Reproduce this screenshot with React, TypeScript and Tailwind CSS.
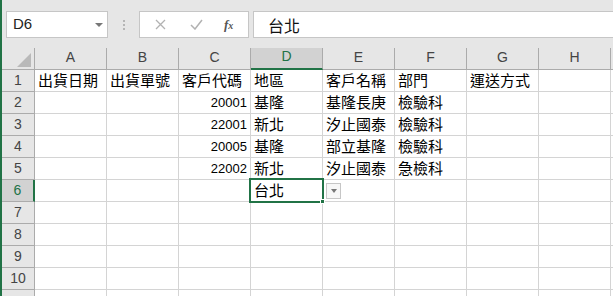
const COLS = ["A", "B", "C", "D", "E", "F", "G", "H"];

type Cell = { text: string; num?: boolean };

const DATA: Record<number, Record<string, Cell>> = {
  1: {
    A: { text: "出貨日期" },
    B: { text: "出貨單號" },
    C: { text: "客戶代碼" },
    D: { text: "地區" },
    E: { text: "客戶名稱" },
    F: { text: "部門" },
    G: { text: "運送方式" },
  },
  2: { C: { text: "20001", num: true }, D: { text: "基隆" }, E: { text: "基隆長庚" }, F: { text: "檢驗科" } },
  3: { C: { text: "22001", num: true }, D: { text: "新北" }, E: { text: "汐止國泰" }, F: { text: "檢驗科" } },
  4: { C: { text: "20005", num: true }, D: { text: "基隆" }, E: { text: "部立基隆" }, F: { text: "檢驗科" } },
  5: { C: { text: "22002", num: true }, D: { text: "新北" }, E: { text: "汐止國泰" }, F: { text: "急檢科" } },
};

const cjk = "font-['Noto_Sans_CJK_TC','Noto_Sans_CJK_SC',sans-serif]";
const ui = "font-['Liberation_Sans','Noto_Sans_CJK_TC',sans-serif]";

function FormulaBar() {
  return (
    <div className="h-[37px] bg-[#e6e6e6] pt-[11px]">
      <div className="flex h-[27px] items-stretch">
        <div className="ml-[4px] flex w-[102px] items-center justify-between border border-[#c6c6c6] bg-white pl-[6px] pr-[4px]">
          <span className={`${ui} text-[15px] text-[#222]`}>D6</span>
          <span className="h-0 w-0 border-x-[4px] border-t-[4px] border-x-transparent border-t-[#777]" />
        </div>
        <div className="flex w-[31px] flex-col items-center justify-center gap-[2px]">
          <span className="h-[2px] w-[2px] bg-[#b5b5b5]" />
          <span className="h-[2px] w-[2px] bg-[#b5b5b5]" />
          <span className="h-[2px] w-[2px] bg-[#b5b5b5]" />
        </div>
        <div className="flex w-[110px] items-center border border-[#c6c6c6] bg-white">
          <svg className="ml-[15px]" width="11" height="11" viewBox="0 0 11 11">
            <path d="M1 1 L10 10 M10 1 L1 10" stroke="#b2b2b2" strokeWidth="1.3" fill="none" />
          </svg>
          <svg className="ml-[24px]" width="13" height="11" viewBox="0 0 13 11">
            <path d="M1 6 L5 10 L12 1" stroke="#b2b2b2" strokeWidth="1.5" fill="none" />
          </svg>
          <span className="ml-[21px] font-['Liberation_Serif',serif] text-[13px] font-bold italic text-[#555]">
            f<span className="text-[10px]">x</span>
          </span>
        </div>
        <div className="ml-[4px] flex flex-1 items-center border-y border-l border-[#c6c6c6] bg-white pl-[14px]">
          <span className={`${cjk} text-[16px] text-[#111]`}>台北</span>
        </div>
      </div>
    </div>
  );
}

function HeaderRow() {
  return (
    <div className="flex h-[22px] bg-[#e6e6e6]">
      <div className="relative w-[33px] shrink-0 border-r border-b border-[#ababab]">
        <svg className="absolute bottom-[2px] right-[3px]" width="14" height="14" viewBox="0 0 14 14">
          <path d="M14 0 L14 14 L0 14 Z" fill="#b9b9b9" />
        </svg>
      </div>
      {COLS.map((c) => {
        const sel = c === "D";
        return (
          <div
            key={c}
            className={`flex w-[72px] shrink-0 items-center justify-center border-r ${ui} text-[14px] ${
              sel
                ? "border-b-2 border-r-[#ababab] border-b-[#217346] bg-[#d2d2d2] text-[#217346]"
                : "border-b border-[#ababab] text-[#444]"
            }`}
          >
            <span className="-mt-[3px]">{c}</span>
          </div>
        );
      })}
      <div className="flex-1 border-b border-[#ababab]" />
    </div>
  );
}

function Row({ n, label = true }: { n: number; label?: boolean }) {
  const cells = DATA[n] ?? {};
  const selRow = n === 6;
  return (
    <div className="flex h-[22px] bg-white">
      <div
        className={`flex w-[33px] shrink-0 items-center justify-center border-b ${ui} text-[14px] ${
          selRow
            ? "border-r-2 border-b-[#ababab] border-r-[#217346] bg-[#d2d2d2] text-[#217346]"
            : "border-r border-[#ababab] bg-[#e6e6e6] text-[#444]"
        }`}
      >
        {label ? n : ""}
      </div>
      {COLS.map((c) => {
        const cell = cells[c];
        const active = selRow && c === "D";
        return (
          <div
            key={c}
            className={`relative flex w-[72px] shrink-0 items-end whitespace-nowrap border-r border-b border-[#d4d4d4] pb-[1px] ${
              cell?.num ? "justify-end pr-[3px]" : "justify-start pl-[3px]"
            }`}
          >
            {cell &&
              (cell.num ? (
                <span className={`${ui} text-[13px] leading-[18px] text-black`}>{cell.text}</span>
              ) : (
                <span className={`${cjk} text-[15px] leading-[20px] text-black`}>{cell.text}</span>
              ))}
            {active && (
              <>
                <div className="absolute -left-[2px] -top-[2px] z-10 h-[25px] w-[75px] border-2 border-[#217346]" />
                <span className={`relative z-20 ${cjk} text-[15px] leading-[20px] text-black`}>台北</span>
                <div className="absolute -bottom-[3px] -right-[3px] z-20 h-[5px] w-[5px] border border-white bg-[#217346]" />
                <div className="absolute -right-[19px] top-[3px] z-20 flex h-[16px] w-[15px] items-center justify-center border border-[#c6c6c6] bg-[#f7f7f7]">
                  <span className="h-0 w-0 border-x-[3.5px] border-t-[4px] border-x-transparent border-t-[#777]" />
                </div>
              </>
            )}
          </div>
        );
      })}
      <div className="flex-1 border-b border-[#d4d4d4]" />
    </div>
  );
}

export default function App() {
  return (
    <div className="h-[296px] w-[613px] overflow-hidden border-l-2 border-[#217346] bg-[#e6e6e6]">
      <FormulaBar />
      <div className="h-[11px] bg-[#e6e6e6]" />
      <HeaderRow />
      {Array.from({ length: 10 }, (_, i) => (
        <Row key={i + 1} n={i + 1} />
      ))}
      <Row n={11} label={false} />
    </div>
  );
}
